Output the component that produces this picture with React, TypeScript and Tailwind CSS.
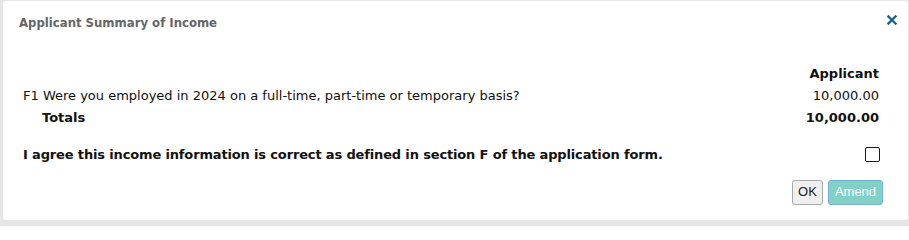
const font = { fontFamily: '"DejaVu Sans", Verdana, sans-serif' }

function CloseIcon() {
  return (
    <svg width="10" height="10" viewBox="0 0 10 10" aria-hidden="true">
      <path d="M1.5 1.5 L8.5 8.5 M8.5 1.5 L1.5 8.5" stroke="#1b6684" strokeWidth="2.4" strokeLinecap="square" />
    </svg>
  )
}

export default function App() {
  return (
    <div className="w-[909px] h-[226px] bg-[#e6e6e6] pl-[3px] pt-[1px] pr-[1px] pb-[6px]">
      <div className="h-full bg-white rounded-[3px] flex flex-col" style={font}>
        {/* Header */}
        <div className="flex items-start justify-between pl-[16px] pr-[11px] pt-[14px]">
          <h2
            className="text-[13px] leading-[16px] font-bold text-[#666666]"
            style={{ fontFamily: '"DejaVu Sans Condensed", "DejaVu Sans", Tahoma, sans-serif' }}
          >
            Applicant Summary of Income
          </h2>
          <button className="mt-[0px] p-0">
            <CloseIcon />
          </button>
        </div>

        {/* Summary table */}
        <div className="pl-[20px] pr-[29px] pt-[32px] text-[13px] text-[#111]">
          <div className="flex justify-end h-[22px] items-center font-bold">Applicant</div>
          <div className="flex justify-between h-[22px] items-center">
            <span>F1 Were you employed in 2024 on a full-time, part-time or temporary basis?</span>
            <span>10,000.00</span>
          </div>
          <div className="flex justify-between h-[22px] items-center font-bold">
            <span className="pl-[19px]">Totals</span>
            <span>10,000.00</span>
          </div>

          <div className="flex justify-between items-center mt-[16px]">
            <span className="font-bold tracking-[-0.15px]">
              I agree this income information is correct as defined in section F of the application form.
            </span>
            <input
              type="checkbox"
              className="appearance-none w-[15px] h-[15px] m-0 mr-[-1px] border-[1.5px] border-[#1a1a1a] rounded-[2px] bg-white"
            />
          </div>
        </div>

        {/* Actions */}
        <div
          className="flex justify-end gap-[5px] pr-[25px] mt-[15px]"
          style={{ fontFamily: '"Liberation Sans", Arial, sans-serif' }}
        >
          <button className="h-[25px] w-[31px] rounded-[3px] border border-[#a9a9a9] bg-[#efefef] text-[13px] text-[#222]">
            OK
          </button>
          <button className="h-[25px] w-[55px] rounded-[3px] border border-[#7aaee0] bg-[#80d1c8] text-[13px] text-white">
            Amend
          </button>
        </div>
      </div>
    </div>
  )
}
